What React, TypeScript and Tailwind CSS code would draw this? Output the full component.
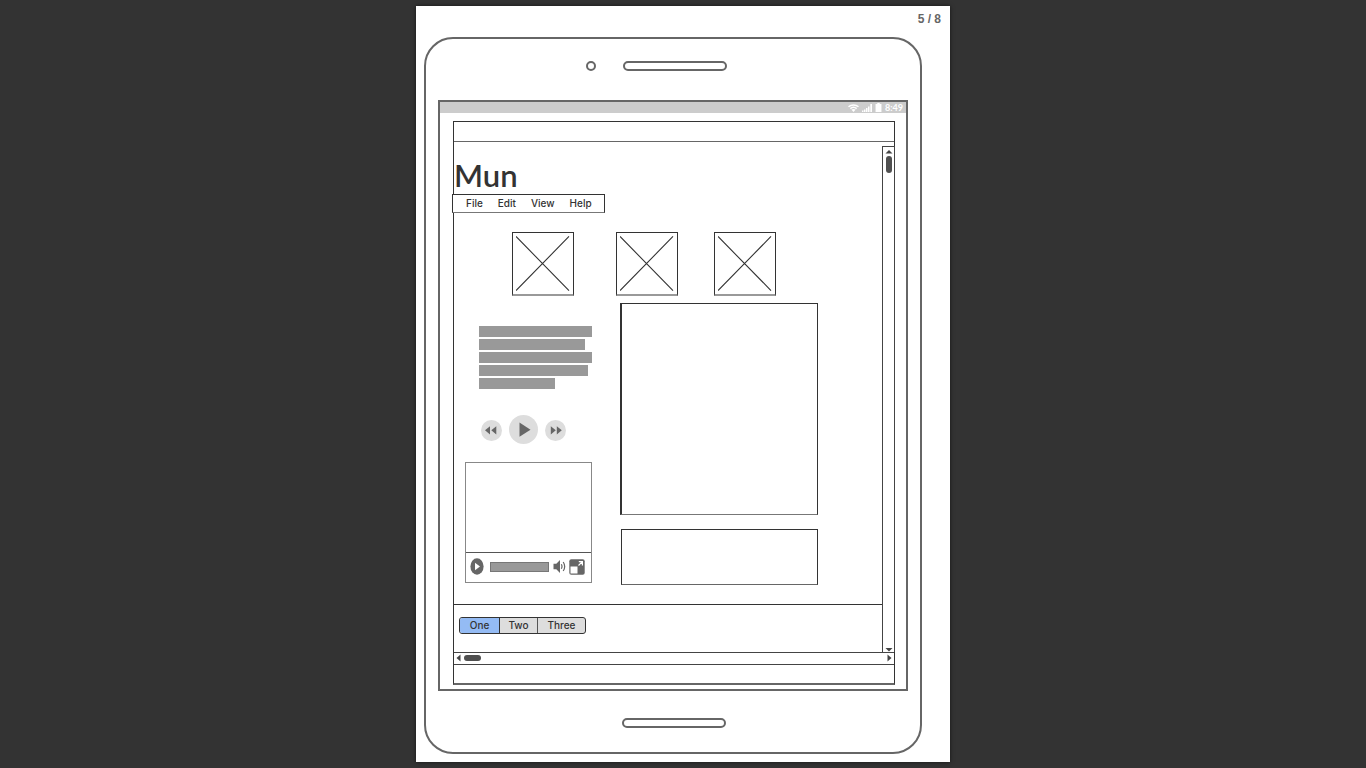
import React from "react";

const MENU = ["File", "Edit", "View", "Help"];

function Placeholder({ label }: { label: string }) {
  return (
    <div role="img" aria-label={label} className="h-16 w-[62px] border border-b-2 border-[#333] border-b-[#999] p-[3px]">
      <svg viewBox="0 0 54 56" preserveAspectRatio="none" className="block h-full w-full" stroke="#333" strokeWidth="1.1">
        <path d="M0 0.5L53 55.5M53 0.5L0 55.5" />
      </svg>
    </div>
  );
}

function StatusBar() {
  return (
    <div className="flex h-[11px] items-center justify-end gap-[3px] bg-[#ccc] pr-[3px] text-white">
      <svg width="11" height="8" viewBox="0 0 11 8" fill="none" stroke="#fff" strokeWidth="1.5">
        <path d="M0.5 2.8C3.4 0.3 7.6 0.3 10.5 2.8M2.3 4.6C4.2 3 6.8 3 8.7 4.6" />
        <path d="M3.3 5.6Q5.5 4.2 7.7 5.6L5.5 8Z" fill="#fff" stroke="none" />
      </svg>
      <svg width="10" height="8" viewBox="0 0 10 8" fill="#fff">
        <path d="M0 6.5h1.5V8H0zM2 5.5h1.5V8H2zM4 4h1.5v4H4zM6 2.5h1.5V8H6zM8.3 0H10v8H8.3z" />
      </svg>
      <svg width="7" height="9" viewBox="0 0 7 9" fill="#fff">
        <path d="M2.3 0h2.4v1H6v8H1V1h1.3z" />
        <path d="M0.5 1v8M6.5 1v8" stroke="#e3e3e3" />
      </svg>
      <span className="font-['Lato',sans-serif] text-[9px] leading-[11px] font-bold">8:49</span>
    </div>
  );
}

function Lines() {
  return (
    <div className="mt-[23px] ml-[25px] flex flex-col gap-[2px]">
      <div className="h-[11px] w-[113px] bg-[#999]" />
      <div className="h-[11px] w-[106px] bg-[#999]" />
      <div className="h-[11px] w-[113px] bg-[#999]" />
      <div className="h-[11px] w-[109px] bg-[#999]" />
      <div className="h-[11px] w-[76px] bg-[#999]" />
    </div>
  );
}

function PlaybackControls() {
  return (
    <div className="mt-[26px] ml-[27px] flex items-center gap-[7px]">
      <button aria-label="Rewind" className="mt-[2px] size-[21px] rounded-full bg-[#ddd]">
        <svg viewBox="0 0 21 21" fill="#666" className="block">
          <path d="M9 6.2v8.2L4 10.3zM15.3 6.2v8.2l-5-4.1z" />
        </svg>
      </button>
      <button aria-label="Play" className="size-[29px] rounded-full bg-[#ddd]">
        <svg viewBox="0 0 29 29" fill="#666" className="block">
          <path d="M10.5 7.5v14.3l11-7.1z" />
        </svg>
      </button>
      <button aria-label="Fast forward" className="mt-[2px] size-[21px] rounded-full bg-[#ddd]">
        <svg viewBox="0 0 21 21" fill="#666" className="block">
          <path d="M5.8 6.2v8.2l5-4.1zM11.8 6.2v8.2l5-4.1z" />
        </svg>
      </button>
    </div>
  );
}

function VideoPlayer() {
  return (
    <div className="mt-[18px] ml-[11px] w-[127px] border border-[#888]">
      <div className="h-[89px]" />
      <div className="flex h-[30px] items-center border-t border-[#555] pb-[2px] pl-1">
        <button aria-label="Play video">
          <svg width="14" height="17" viewBox="0 0 14 17" className="block">
            <ellipse cx="7" cy="8.5" rx="6.6" ry="8.2" fill="#666" />
            <path d="M5 4.7v7.6l5-3.8z" fill="#fff" />
          </svg>
        </button>
        <div className="ml-[6px] h-[10px] w-[59px] border border-[#777] bg-[#999]" />
        <button aria-label="Volume" className="ml-1">
          <svg width="13" height="15" viewBox="0 0 13 15" className="block">
            <path d="M0.5 4.7h2.8L7 1v13L3.3 10.3H0.5z" fill="#666" />
            <path d="M8.3 5.2q1.4 2.3 0 4.6M10.2 3q3 4.5 0 9" fill="none" stroke="#666" strokeWidth="1.2" />
          </svg>
        </button>
        <button aria-label="Full screen" className="ml-[3px]">
          <svg width="16" height="16" viewBox="0 0 16 16" className="block">
            <rect x="0.3" y="0.3" width="15.4" height="15.4" rx="2" fill="#666" />
            <rect x="1.5" y="7.5" width="7" height="7" fill="#fff" />
            <path d="M9.5 6.5l3.6-3.6M9.8 2.6h3.6v3.8" fill="none" stroke="#fff" strokeWidth="1.2" />
          </svg>
        </button>
      </div>
    </div>
  );
}

function Tabs() {
  return (
    <div className="mt-3 ml-[5px] flex h-[17px] w-fit overflow-hidden rounded-[3px] border border-[#333] bg-[#ddd] text-[10px] leading-[15px] font-medium text-[#333]">
      <button className="w-[39px] bg-[#94bbf4]">One</button>
      <button className="w-[38px] border-l border-[#333]">Two</button>
      <button className="w-12 border-l border-[#555]">Three</button>
    </div>
  );
}

export default function App() {
  return (
    <div className="flex min-h-screen justify-center bg-[#333] py-[6px] font-['Inter',sans-serif]">
      <main className="w-full max-w-[534px] bg-white pr-7 pb-2 pl-2 shadow-[0_0_4px_rgba(0,0,0,0.6)]">
        <div className="-mr-5 h-[31px] pt-[5px] pr-px text-right font-['Liberation_Sans',sans-serif] text-[12px] leading-4 font-bold text-[#666]">
          5 / 8
        </div>

        <div className="rounded-[29px] border-2 border-[#666] px-3">
          <div className="flex h-[61px] items-center justify-center gap-[27px] pb-[7px]">
            <div className="size-[10px] rounded-full border-2 border-[#666]" />
            <div className="mr-[33px] h-[10px] w-[104px] rounded-full border-2 border-[#666]" />
          </div>

          <div className="border-2 border-[#666]">
            <StatusBar />
            <div className="mt-2 mr-[11px] mb-1 ml-[13px] border border-b-2 border-[#333] border-b-[#666]">
              <div className="h-5 border-b border-[#666]" />

              <div className="flex">
                <div className="h-[510px] min-w-0 flex-1">
                  <h1 className="h-[52px] pt-[13px] font-['Lato',sans-serif] text-[31px] leading-10 font-semibold text-[#333]">Mun</h1>

                  <nav className="-ml-[2px] flex h-[19px] w-[153px] items-center gap-[15px] border border-[#333] border-b-[#777] bg-white pl-[13px] text-[10px] font-medium text-[#333]">
                    {MENU.map((item) => (
                      <button key={item}>{item}</button>
                    ))}
                  </nav>

                  <div className="mt-[19px] ml-[58px] flex">
                    <Placeholder label="Image one" />
                    <div className="mr-9 ml-[42px]">
                      <Placeholder label="Image two" />
                    </div>
                    <Placeholder label="Image three" />
                  </div>

                  <div className="mt-[7px] flex gap-7">
                    <div>
                      <Lines />
                      <PlaybackControls />
                      <VideoPlayer />
                    </div>
                    <div className="w-[198px]">
                      <div className="h-[212px] border border-l-2 border-[#333] border-b-[#777]" />
                      <div className="mt-[14px] ml-px h-14 border border-[#333] border-b-[#666]" />
                    </div>
                  </div>

                  <div className="mt-[19px] border-t border-[#333]">
                    <Tabs />
                  </div>
                </div>

                <div className="mt-1 -mr-px flex w-[13px] flex-col items-center border border-b-0 border-[#444] pl-px">
                  <button aria-label="Scroll up" className="h-[9px]">
                    <svg width="8" height="5" viewBox="0 0 8 5" className="block"><path d="M0.5 4.5L4 1L7.5 4.5z" fill="#444" /></svg>
                  </button>
                  <div className="h-[17px] w-[6px] rounded-full bg-[#505050]" />
                  <button aria-label="Scroll down" className="mt-auto h-[6px]">
                    <svg width="8" height="5" viewBox="0 0 8 5" className="block"><path d="M0.5 1L4 4.5L7.5 1z" fill="#444" /></svg>
                  </button>
                </div>
              </div>

              <div className="flex h-[13px] items-center border-y border-[#444] px-[2px] pb-px">
                <button aria-label="Scroll left">
                  <svg width="5" height="8" viewBox="0 0 5 8" className="block"><path d="M4.5 0.5L0.5 4L4.5 7.5z" fill="#444" /></svg>
                </button>
                <div className="ml-[3px] h-[6px] w-[17px] rounded-full bg-[#505050]" />
                <button aria-label="Scroll right" className="ml-auto">
                  <svg width="5" height="8" viewBox="0 0 5 8" className="block"><path d="M0.5 0.5L4.5 4L0.5 7.5z" fill="#444" /></svg>
                </button>
              </div>
              <div className="h-[18px]" />
            </div>
          </div>

          <div className="flex h-[61px] items-center justify-center pt-[3px] pl-[2px]">
            <div className="h-[10px] w-[104px] rounded-full border-2 border-[#666]" />
          </div>
        </div>
      </main>
    </div>
  );
}
